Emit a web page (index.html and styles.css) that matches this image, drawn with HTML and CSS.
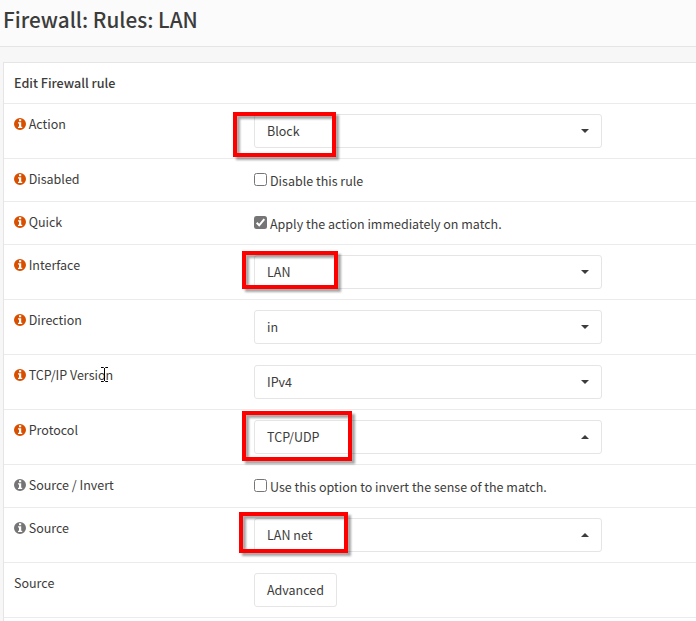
FILE: index.html
```html
<!DOCTYPE html>
<html lang="en">
<head>
<meta charset="utf-8">
<title>Firewall: Rules: LAN</title>
<link rel="stylesheet" href="styles.css">
</head>
<body>
<svg class="defs" width="0" height="0">
  <symbol id="info" viewBox="0 0 12 12"><path fill-rule="evenodd" d="M6 0a6 6 0 1 1 0 12A6 6 0 0 1 6 0zM5 1.3V3.2h2.2V1.3zM4 4.2v1.3h1V8.8H4V10h4.2V8.8h-1V4.2z"/></symbol>
</svg>
<header class="page-head"><h1>Firewall: Rules: LAN</h1></header>
<main class="panel">
  <div class="row head"><strong>Edit Firewall rule</strong></div>
  <div class="row"><div class="label"><svg class="info"><use href="#info"/></svg>Action</div><div class="select"><span>Block</span><i class="caret"></i></div></div>
  <div class="row short"><div class="label"><svg class="info"><use href="#info"/></svg>Disabled</div><label class="check"><span class="box"></span><span>Disable this rule</span></label></div>
  <div class="row short"><div class="label"><svg class="info"><use href="#info"/></svg>Quick</div><label class="check"><span class="box checked"><svg viewBox="0 0 13 13"><path d="M2.7 6.8 5.2 9.3 10.3 3.2"/></svg></span><span>Apply the action immediately on match.</span></label></div>
  <div class="row"><div class="label"><svg class="info"><use href="#info"/></svg>Interface</div><div class="select"><span>LAN</span><i class="caret"></i></div></div>
  <div class="row"><div class="label"><svg class="info"><use href="#info"/></svg>Direction</div><div class="select"><span>in</span><i class="caret"></i></div></div>
  <div class="row"><div class="label"><svg class="info"><use href="#info"/></svg>TCP/IP Version</div><div class="select"><span>IPv4</span><i class="caret"></i></div></div>
  <div class="row"><div class="label"><svg class="info"><use href="#info"/></svg>Protocol</div><div class="select"><span>TCP/UDP</span><i class="caret up"></i></div></div>
  <div class="row short"><div class="label"><svg class="info muted"><use href="#info"/></svg>Source / Invert</div><label class="check"><span class="box"></span><span>Use this option to invert the sense of the match.</span></label></div>
  <div class="row"><div class="label"><svg class="info muted"><use href="#info"/></svg>Source</div><div class="select"><span>LAN net</span><i class="caret up"></i></div></div>
  <div class="row"><div class="label">Source</div><button class="btn">Advanced</button></div>
</main>
<div class="mark mark-action"></div>
<div class="mark mark-interface"></div>
<div class="mark mark-protocol"></div>
<div class="mark mark-source"></div>
<svg class="cursor" viewBox="0 0 9 17"><path d="M1 1.5h2.5l1 1 1-1H8M4.5 2v13M1 15.5h2.5l1-1 1 1H8"/></svg>
</body>
</html>
```
FILE: styles.css
```css
* { box-sizing: border-box; }
body {
  margin: 0;
  height: 621px;
  overflow: hidden;
  position: relative;
  background: #f7f7f7;
  color: #3c3c3b;
  font: 12.5px/20px "Noto Sans CJK SC", "Noto Sans", sans-serif;
}
.defs { position: absolute; }
.page-head {
  height: 47px;
  padding: 7px 0 0 3px;
  background: #fbfbfb;
  border-bottom: 1px solid #e5e5e5;
}
h1 { margin: 0; font-size: 20.75px; line-height: 24px; font-weight: 500; }
.panel {
  margin: 15px 0 0 3px;
  height: 570px;
  background: #fff;
  border: solid #e5e5e5;
  border-width: 1px 0 0 1px;
}
.row {
  display: grid;
  grid-template-columns: 240px 348px;
  align-items: start;
  height: 55px;
  padding: 10px 0 0 10px;
  border-bottom: 1px solid #ebebeb;
}
.head { height: 41px; }
.head strong { font-weight: 500; font-size: 12.6px; }
.short { height: 43px; }
.label { display: flex; align-items: center; white-space: nowrap; }
.info { width: 12px; height: 12px; margin-right: 2.7px; fill: #d94f00; }
.info.muted { fill: #757575; }
.select, .btn {
  height: 34px;
  border: 1px solid #e5e5e5;
  border-radius: 3px;
  background: #fff;
}
.select {
  display: flex;
  align-items: center;
  justify-content: space-between;
  padding: 0 12px;
}
.caret {
  border: 4px solid transparent;
  border-top-color: #3c3c3b;
  border-bottom: 0;
}
.caret.up { border-top: 0; border-bottom: 4px solid #3c3c3b; }
.btn {
  justify-self: start;
  width: 83px;
  padding: 0;
  color: inherit;
  font: inherit;
}
.check { display: flex; padding-top: 2px; white-space: nowrap; }
.box {
  width: 13px;
  height: 13px;
  margin: 2px 3px 0 0;
  border: 1px solid #767676;
  border-radius: 2.5px;
  background: #fff;
}
.checked { border: 0; background: #757575; }
.checked svg { display: block; fill: none; stroke: #fff; stroke-width: 2; }
.mark {
  position: absolute;
  border: 4px solid #f00;
  filter: drop-shadow(3px 3px 1px rgba(0, 0, 0, .35));
}
.mark-action { left: 233px; top: 112px; width: 103px; height: 45px; }
.mark-interface { left: 242px; top: 251px; width: 96px; height: 38px; }
.mark-protocol { left: 242px; top: 411px; width: 110px; height: 50px; }
.mark-source { left: 239px; top: 512px; width: 109px; height: 41px; }
.cursor {
  position: absolute;
  left: 100px;
  top: 366px;
  width: 9px;
  height: 17px;
  fill: none;
  stroke: #000;
}
```
